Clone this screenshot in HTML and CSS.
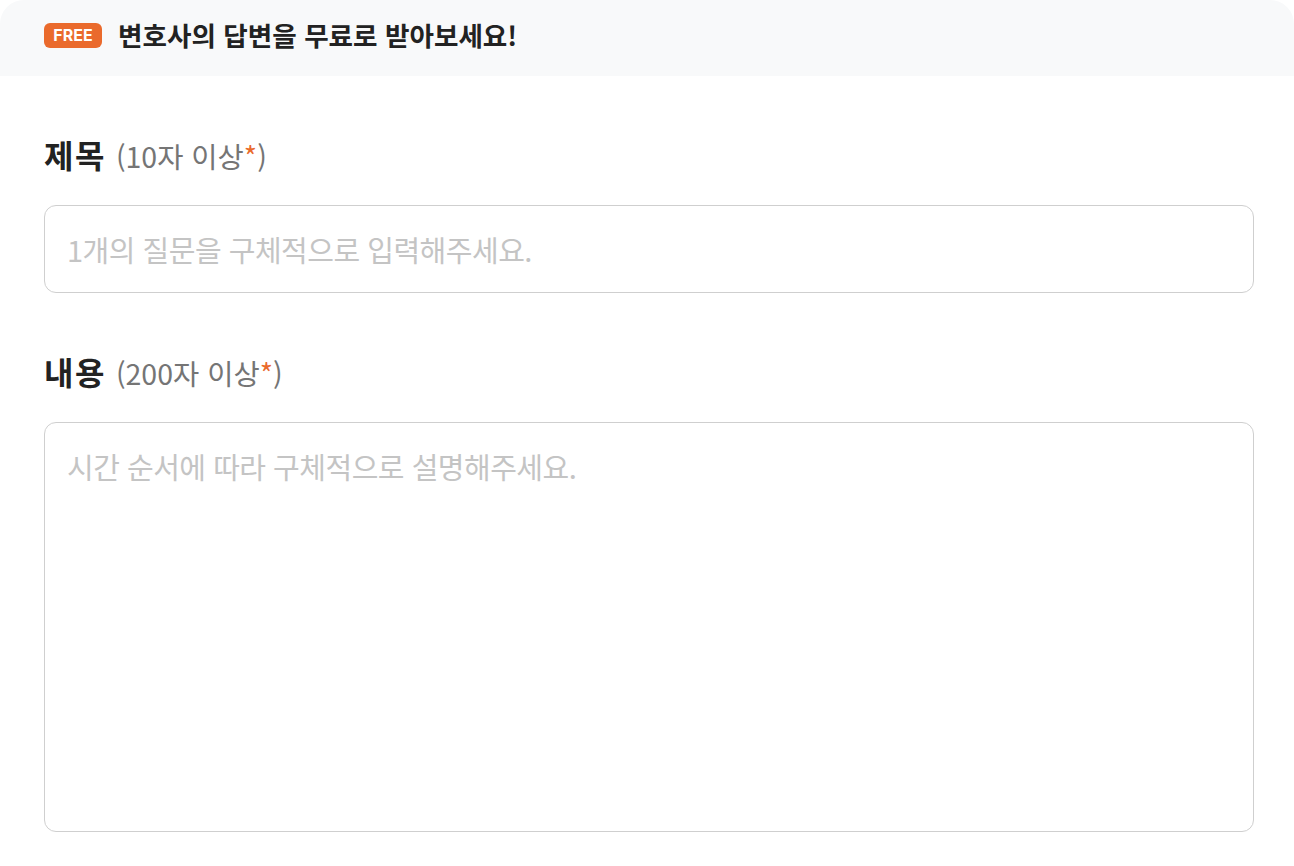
FILE: index.html
```html
<!DOCTYPE html>
<html lang="ko">
<head>
<meta charset="utf-8">
<link rel="stylesheet" href="styles.css">
</head>
<body>
<div class="page">
  <div class="banner">
    <span class="badge">FREE</span>
    <span class="banner-title">변호사의 답변을 무료로 받아보세요!</span>
  </div>
  <div class="form">
    <div class="field">
      <label class="label"><span class="label-main">제목</span><span class="label-sub">(10자 이상<span class="req">*</span>)</span></label>
      <input class="input" type="text" placeholder="1개의 질문을 구체적으로 입력해주세요.">
    </div>
    <div class="field">
      <label class="label"><span class="label-main">내용</span><span class="label-sub">(200자 이상<span class="req">*</span>)</span></label>
      <textarea class="textarea" placeholder="시간 순서에 따라 구체적으로 설명해주세요."></textarea>
    </div>
  </div>
</div>
</body>
</html>
```
FILE: styles.css
```css
* { box-sizing: border-box; }
html, body { margin: 0; padding: 0; background: #fff; }
body {
  font-family: "Noto Sans CJK KR", "Noto Sans", sans-serif;
  color: #222;
  width: 1294px;
  height: 866px;
  overflow: hidden;
}
.page { width: 1294px; }
.banner {
  height: 76px;
  background: #f8f9fa;
  border-radius: 24px 24px 0 0;
  display: flex;
  align-items: center;
  padding-left: 44px;
  gap: 16px;
  padding-bottom: 6px;
}
.badge {
  display: inline-flex;
  align-items: center;
  justify-content: center;
  width: 58px;
  height: 25px;
  border-radius: 6px;
  background: #ea6a2c;
  color: #fff;
  font-family: "Inter", "Noto Sans", sans-serif;
  font-weight: 700;
  font-size: 16px;
}
.banner-title {
  font-size: 26.6px;
  font-weight: 700;
  color: #222;
  line-height: 30px;
}
.form {
  padding: 0 40px 0 44px;
  display: flex;
  flex-direction: column;
}
.field {
  display: flex;
  flex-direction: column;
  margin-top: 57px;
}
.label {
  display: flex;
  align-items: baseline;
  line-height: 42px;
  height: 42px;
  margin-bottom: 30px;
  white-space: nowrap;
}
.label-main {
  font-size: 32px;
  font-weight: 700;
  color: #222;
  letter-spacing: 1.5px;
}
.label-sub {
  font-size: 28.5px;
  font-weight: 400;
  color: #757575;
  margin-left: 10px;
}
.req { color: #ea6a2c; }
.input, .textarea {
  width: 1210px;
  border: 1px solid #cfcfcf;
  border-radius: 12px;
  background: #fff;
  font-family: "Noto Sans CJK KR", "Noto Sans", sans-serif;
  font-size: 29px;
  color: #222;
  outline: none;
  letter-spacing: -0.5px;
}
.input {
  height: 88px;
  padding: 0 22px;
}
.textarea {
  height: 410px;
  padding: 24px 22px;
  line-height: 38px;
  resize: none;
  display: block;
}
.input::placeholder, .textarea::placeholder { color: #c4c4c4; }
```
